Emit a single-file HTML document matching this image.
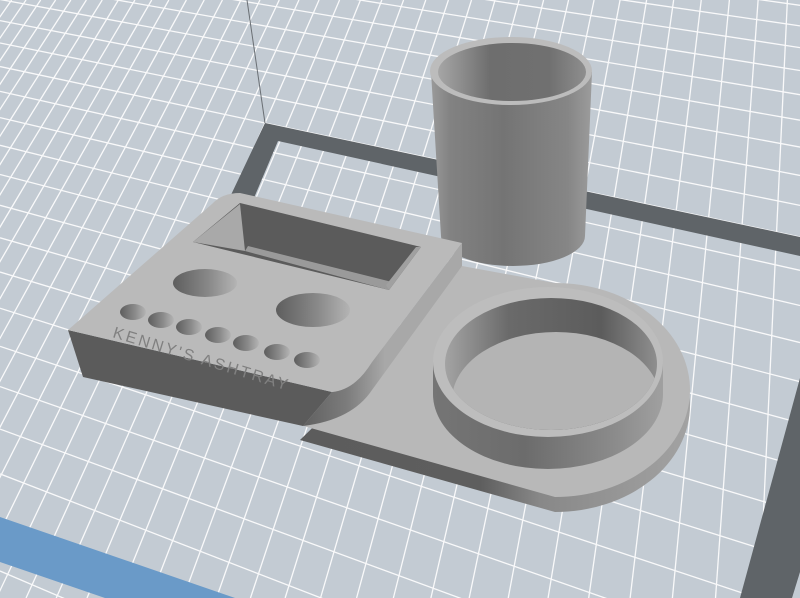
<!DOCTYPE html>
<html><head><meta charset="utf-8"><style>
html,body{margin:0;padding:0;background:#c3cbd3;overflow:hidden;width:800px;height:598px}
svg{display:block}
</style></head><body>
<svg id="s" width="800" height="598" viewBox="0 0 800 598" xmlns="http://www.w3.org/2000/svg">
<defs>
<linearGradient id="cup" x1="0" x2="1" y1="0" y2="0">
<stop offset="0" stop-color="#9a9a9a"/><stop offset="0.12" stop-color="#828282"/><stop offset="0.45" stop-color="#747474"/><stop offset="0.85" stop-color="#868686"/><stop offset="1" stop-color="#9c9c9c"/>
</linearGradient>
<linearGradient id="cupin" x1="0" x2="1" y1="0" y2="0">
<stop offset="0" stop-color="#a6a6a6"/><stop offset="0.35" stop-color="#6e6e6e"/><stop offset="0.75" stop-color="#707070"/><stop offset="1" stop-color="#8e8e8e"/>
</linearGradient>
<linearGradient id="ring" x1="0" x2="1" y1="0" y2="0">
<stop offset="0" stop-color="#757575"/><stop offset="0.4" stop-color="#6c6c6c"/><stop offset="0.8" stop-color="#8c8c8c"/><stop offset="1" stop-color="#a0a0a0"/>
</linearGradient>
<linearGradient id="ringin" x1="0" x2="1" y1="0" y2="0">
<stop offset="0" stop-color="#a8a8a8"/><stop offset="0.3" stop-color="#6a6a6a"/><stop offset="0.7" stop-color="#5c5c5c"/><stop offset="1" stop-color="#9a9a9a"/>
</linearGradient>
<linearGradient id="plate" gradientUnits="userSpaceOnUse" x1="300" x2="700" y1="0" y2="0">
<stop offset="0" stop-color="#5c5c5c"/><stop offset="0.45" stop-color="#5e5e5e"/><stop offset="0.6" stop-color="#888"/><stop offset="1" stop-color="#a4a4a4"/>
</linearGradient>
<linearGradient id="corner" gradientUnits="userSpaceOnUse" x1="300" x2="385" y1="0" y2="0">
<stop offset="0" stop-color="#5e5e5e"/><stop offset="0.55" stop-color="#7c7c7c"/><stop offset="1" stop-color="#a8a8a8"/>
</linearGradient>
<linearGradient id="hole" x1="0" x2="1" y1="0" y2="0">
<stop offset="0" stop-color="#5e5e5e"/><stop offset="0.55" stop-color="#888"/><stop offset="1" stop-color="#b4b4b4"/>
</linearGradient>
<clipPath id="rc"><ellipse cx="551" cy="364" rx="106" ry="66"/></clipPath>
</defs>
<rect width="800" height="598" fill="#c3cbd3"/>
<g id="grid" stroke="#ffffff" stroke-width="1.3" opacity="0.9"></g>
<polygon points="265,123 800,237 800,256 278,141 192,345 160,345" fill="#5f6468"/>
<polygon points="800,378 740,598 792,598 800,572" fill="#5f6468"/>
<polygon points="0,517 235,598 105,598 0,562" fill="#6a9ac8"/>
<line x1="247" y1="0" x2="265" y2="123" stroke="#6a6f74" stroke-width="1"/>

<path d="M431,72 L441,236 A72 30 0 0 0 585,236 L592,72 Z" fill="url(#cup)"/>
<ellipse cx="511" cy="71" rx="81" ry="34" fill="#bcbcbc"/>
<ellipse cx="512" cy="72" rx="74" ry="29" fill="url(#cupin)"/>

<path d="M300,440 L462,281 L555,298 A135 107 0 0 1 555,512 Z" fill="url(#plate)"/>
<path d="M300,425 L462,266 L555,283 A135 107 0 0 1 555,497 Z" fill="#b8b8b8"/>

<path d="M433,362 L433,394 A115 75 0 0 0 663,394 L663,362 Z" fill="url(#ring)"/>
<ellipse cx="548" cy="362" rx="115" ry="75" fill="#bdbdbd"/>
<g clip-path="url(#rc)">
<rect x="440" y="290" width="230" height="150" fill="url(#ringin)"/>
<ellipse cx="556" cy="400" rx="104" ry="68" fill="#b4b4b4"/>
</g>

<path d="M68,330 L332,392 L303,426 L83,377 Z" fill="#5b5b5b"/>
<path d="M332,392 Q355,388 372,362 L462,243 L462,266 L372,390 Q352,420 303,426 Z" fill="url(#corner)"/>
<path d="M68,330 L212,204 Q222,193 240,193 L462,243 L372,362 Q355,390 332,392 Z" fill="#bababa"/>
<polygon points="193,242 240,203 421,247 389,290" fill="#5b5b5b"/>
<polygon points="193,242 240,204 245,251" fill="#a9a9a9"/>
<polygon points="245,251 389,290 392,282 248,246" fill="#9a9a9a"/>
<polygon points="389,290 421,247 416,247 386,285" fill="#a0a0a0"/>
<ellipse cx="205" cy="283" rx="32" ry="14" fill="url(#hole)"/>
<ellipse cx="313" cy="310" rx="37" ry="17" fill="url(#hole)"/>
<ellipse cx="133" cy="312" rx="13" ry="8" fill="url(#hole)"/>
<ellipse cx="161" cy="320" rx="13" ry="8" fill="url(#hole)"/>
<ellipse cx="189" cy="327" rx="13" ry="8" fill="url(#hole)"/>
<ellipse cx="218" cy="335" rx="13" ry="8" fill="url(#hole)"/>
<ellipse cx="246" cy="343" rx="13" ry="8" fill="url(#hole)"/>
<ellipse cx="277" cy="352" rx="13" ry="8" fill="url(#hole)"/>
<ellipse cx="307" cy="360" rx="13" ry="8" fill="url(#hole)"/>
<text x="112" y="337" transform="rotate(17 112 337)" font-family="Liberation Sans, sans-serif" font-size="16" letter-spacing="2.5" fill="#808080">KENNY'S ASHTRAY</text>
</svg>
<script>
(function(){
var g=document.getElementById('grid'),ns='http://www.w3.org/2000/svg';
function ln(x1,y1,x2,y2){var l=document.createElementNS(ns,'line');l.setAttribute('x1',x1);l.setAttribute('y1',y1);l.setAttribute('x2',x2);l.setAttribute('y2',y2);g.appendChild(l);}
var V1=[-2349,-434],V2=[843,-1192];
for(var k=-40;k<40;k++){var y=-380+503*Math.pow(1.055,k);var s=(y-V1[1])/(265-V1[0]);
 ln(0,y-265*s,800,y+535*s);}
for(var k=-50;k<40;k++){var x=-866+1131*Math.pow(1.02,k);var d=(x-V2[0])/(123-V2[1]);
 ln(x-123*d,0,x+475*d,598);}
})();
</script>
</body></html>
